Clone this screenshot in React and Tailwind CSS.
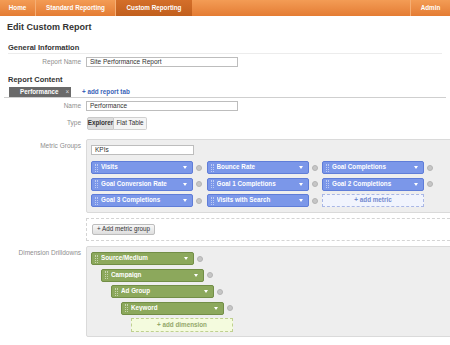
const metrics = [
  ['Visits', 'Bounce Rate', 'Goal Completions'],
  ['Goal Conversion Rate', 'Goal 1 Completions', 'Goal 2 Completions'],
  ['Goal 3 Completions', 'Visits with Search', null],
];

const dimensions = ['Source/Medium', 'Campaign', 'Ad Group', 'Keyword'];

const indents = ['ml-0', 'ml-[10px]', 'ml-[20px]', 'ml-[30px]', 'ml-[40px]'];

const Remove = () => (
  <span className="ml-[3px] w-[6px] h-[6px] shrink-0 rounded-full bg-[#c6c6c6] border border-[#b4b4b4]" />
);

const Pill = ({ label, color }) => (
  <div
    className={`flex items-center h-[13px] rounded-[2px] border ${
      color === 'blue'
        ? 'w-[102px] bg-[#7b97e9] border-[#5f7dd8]'
        : 'w-[103px] bg-[#8ca85c] border-[#728e46]'
    }`}
  >
    <span className="ml-[3px] w-[3px] h-[8px] border-l border-r border-dotted border-white/50" />
    <span className="ml-[3px] flex-1 text-[6.3px] font-bold text-white leading-none truncate">
      {label}
    </span>
    <span className="mr-[5px] w-0 h-0 border-l-[2.5px] border-r-[2.5px] border-t-[3px] border-l-transparent border-r-transparent border-t-white" />
  </div>
);

const Label = ({ children }) => (
  <div className="w-[81px] shrink-0 text-right text-[6.5px] text-[#8e8e8e] leading-none">
    {children}
  </div>
);

const Input = ({ value, width = 'w-[152px]' }) => (
  <div
    className={`${width} h-[10px] flex items-center border border-[#bdbdbd] bg-white pl-[3px] text-[6.5px] text-[#333] leading-none`}
  >
    {value}
  </div>
);

export default function App() {
  return (
    <div
      className="w-[450px] h-[345px] overflow-hidden bg-white"
      style={{ fontFamily: '"Liberation Sans", Arial, sans-serif' }}
    >
      <nav className="flex h-[16px] bg-gradient-to-b from-[#f39c55] to-[#e47c33] text-white text-[6.3px] font-bold leading-none">
        <div className="w-[36px] flex items-center justify-center border-r border-[#f5ae74]">Home</div>
        <div className="w-[80px] flex items-center justify-center border-r border-[#f5ae74]">
          Standard Reporting
        </div>
        <div className="w-[76px] flex items-center justify-center bg-gradient-to-b from-[#d46f2a] to-[#c15f1d]">
          Custom Reporting
        </div>
        <div className="flex-1" />
        <div className="w-[40px] flex items-center justify-center border-l border-[#f5ae74]">Admin</div>
      </nav>

      <h1 className="mt-[6px] ml-[7px] h-[11px] text-[9px] font-bold text-[#333] leading-[11px]">
        Edit Custom Report
      </h1>

      <h2 className="mt-[10px] mx-[8px] h-[11px] text-[7.5px] font-bold text-[#333] leading-[10px] border-b border-[#ececec]">
        General Information
      </h2>

      <div className="mt-[3px] flex items-center">
        <Label>Report Name</Label>
        <div className="ml-[5px]">
          <Input value="Site Performance Report" />
        </div>
      </div>

      <h2 className="mt-[8px] ml-[8px] h-[10px] text-[7.5px] font-bold text-[#333] leading-[10px]">
        Report Content
      </h2>

      <div className="mt-[2px] mx-[4px] flex items-end border-b border-[#cfcfcf]">
        <div className="ml-[5px] w-[62px] h-[10px] flex items-center bg-[#6a6a6a] text-white text-[6.3px] font-bold leading-none">
          <span className="ml-[11px]">Performance</span>
          <span className="ml-[7px] font-normal text-[#ddd]">×</span>
        </div>
        <span className="ml-[11px] h-[10px] flex items-center text-[6.3px] font-bold text-[#3a63b8] leading-none">
          + add report tab
        </span>
      </div>

      <div className="mt-[3px] flex items-center">
        <Label>Name</Label>
        <div className="ml-[5px]">
          <Input value="Performance" />
        </div>
      </div>

      <div className="mt-[6px] flex items-center">
        <Label>Type</Label>
        <div className="ml-[6px] flex h-[13px] text-[6.3px] leading-none text-[#333]">
          <div className="w-[27px] flex items-center justify-center font-bold bg-[#dedede] border border-[#c9c9c9] rounded-l-[2px]">
            Explorer
          </div>
          <div className="w-[33px] flex items-center justify-center bg-[#f5f5f5] border border-l-0 border-[#d0d0d0] rounded-r-[2px]">
            Flat Table
          </div>
        </div>
      </div>

      <div className="mt-[9px] flex items-start">
        <div className="pt-[4px]">
          <Label>Metric Groups</Label>
        </div>
        <div className="ml-[5px] flex-1 -mr-[10px]">
          <div className="bg-[#eeeeee] border border-[#dadada] rounded-[2px] pt-[5px] pb-[5px] pl-[4px]">
            <Input value="KPIs" width="w-[103px]" />
            <div className="mt-[6px] flex flex-col gap-[3.5px]">
              {metrics.map((row, i) => (
                <div key={i} className="flex items-center">
                  {row.map((m, j) =>
                    m ? (
                      <div key={j} className="flex items-center mr-[4.5px]">
                        <Pill label={m} color="blue" />
                        <Remove />
                      </div>
                    ) : (
                      <div
                        key={j}
                        className="w-[102px] h-[13px] flex items-center justify-center border border-dashed border-[#a9b7e6] bg-[#f1f4fd] text-[6.3px] font-bold text-[#7288cf] leading-none"
                      >
                        + add metric
                      </div>
                    )
                  )}
                </div>
              ))}
            </div>
          </div>

          <div className="mt-[5px] border border-dashed border-[#d4d4d4] pt-[5px] pb-[5px] pl-[5px]">
            <div className="w-[63px] h-[11px] flex items-center justify-center rounded-[2px] border border-[#bdbdbd] bg-gradient-to-b from-[#f8f8f8] to-[#dedede] text-[6.3px] text-[#333] leading-none">
              + Add metric group
            </div>
          </div>
        </div>
      </div>

      <div className="mt-[5px] flex items-start">
        <div className="pt-[4px]">
          <Label>Dimension Drilldowns</Label>
        </div>
        <div className="ml-[5px] flex-1 -mr-[10px]">
          <div className="bg-[#eeeeee] border border-[#dadada] rounded-[2px] pt-[5px] pb-[4px] pl-[4px] flex flex-col gap-[3.5px]">
            {dimensions.map((d, i) => (
              <div key={d} className={`flex items-center ${indents[i]}`}>
                <Pill label={d} color="green" />
                <Remove />
              </div>
            ))}
            <div
              className={`${indents[4]} w-[102px] h-[14px] flex items-center justify-center border border-dashed border-[#bfd08f] bg-[#f4fbde] text-[6.3px] font-bold text-[#93a86a] leading-none`}
            >
              + add dimension
            </div>
          </div>
        </div>
      </div>
    </div>
  );
}
